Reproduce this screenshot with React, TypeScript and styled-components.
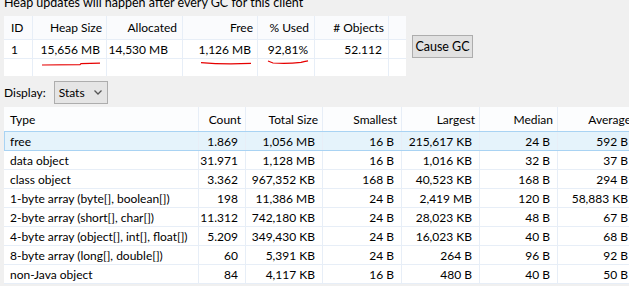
import React from 'react';
import styled, { createGlobalStyle } from 'styled-components';

const GlobalStyle = createGlobalStyle`
  html, body {
    margin: 0;
    padding: 0;
    background: #f0f0f0;
    overflow: hidden;
  }
  body {
    font-family: Lato, "Noto Sans", sans-serif;
    font-size: 12px;
    color: #000;
  }
`;

const Page = styled.div`
  width: 629px;
  height: 286px;
  overflow: hidden;
  display: flex;
  flex-direction: column;
  padding-left: 4px;
  box-sizing: border-box;
`;

const Notice = styled.div`
  height: 16px;
  line-height: 16px;
  margin-top: -5px;
  font-size: 12.5px;
  white-space: nowrap;
`;

const TopArea = styled.div`
  display: flex;
  align-items: center;
  gap: 6px;
  margin-top: 5px;
`;

const GridLine = '#e7eef7';

const StatGrid = styled.div`
  display: grid;
  grid-template-columns: 28px 73px 75px 74px 56px 73px 17px;
  grid-template-rows: 23px 18px 17px;
  gap: 1px;
  background: ${GridLine};
`;

const StatCell = styled.div<{ $head?: boolean; $align?: 'left' | 'right'; $pr?: number }>`
  background: ${({ $head }) => ($head ? '#fafbfd' : '#ffffff')};
  display: flex;
  align-items: center;
  justify-content: ${({ $align }) => ($align === 'left' ? 'flex-start' : 'flex-end')};
  padding: 0 ${({ $pr }) => $pr ?? 6}px 0 7px;
  white-space: nowrap;
  overflow: hidden;
`;

const MarkCell = styled.div`
  background: #ffffff;
  overflow: hidden;
  svg {
    display: block;
  }
`;

const Button = styled.button`
  width: 61px;
  height: 23px;
  padding: 0;
  background: #e1e1e1;
  border: 1px solid #adadad;
  font: inherit;
  font-size: 12.5px;
  color: #000;
`;

const DisplayRow = styled.div`
  display: flex;
  align-items: center;
  gap: 8px;
  margin-top: 5px;
`;

const Select = styled.div`
  width: 54px;
  height: 23px;
  box-sizing: border-box;
  background: #e5e5e5;
  border: 1px solid #adadad;
  display: flex;
  align-items: center;
  justify-content: space-between;
  padding: 0 5px 0 4px;
`;

const Table = styled.div`
  margin-top: 3px;
  width: 640px;
  background: #ffffff;
`;

const Row = styled.div<{ $head?: boolean; $selected?: boolean }>`
  display: flex;
  height: ${({ $head }) => ($head ? 24 : 18)}px;
  border-bottom: 1px solid ${({ $selected }) => ($selected ? '#a9d3f3' : GridLine)};
  background: ${({ $head, $selected }) => ($selected ? '#e5f3fb' : $head ? '#fcfdfe' : '#ffffff')};
  box-shadow: ${({ $selected }) => ($selected ? 'inset 1px 0 0 #a9d3f3, 0 -1px 0 #a9d3f3' : 'none')};
`;

const Cell = styled.div<{ $w: number; $align: 'left' | 'right'; $head?: boolean }>`
  width: ${({ $w }) => $w}px;
  flex: none;
  box-sizing: border-box;
  border-right: 1px solid ${GridLine};
  display: flex;
  align-items: center;
  justify-content: ${({ $align }) => ($align === 'left' ? 'flex-start' : 'flex-end')};
  padding: ${({ $align, $head }) => ($align === 'left' ? '0 0 0 6px' : $head ? '0 4px 0 0' : '0 7px 0 0')};
  white-space: nowrap;
  overflow: hidden;
`;

const columns: { title: string; w: number; align: 'left' | 'right' }[] = [
  { title: 'Type', w: 195, align: 'left' },
  { title: 'Count', w: 47, align: 'right' },
  { title: 'Total Size', w: 77, align: 'right' },
  { title: 'Smallest', w: 79, align: 'right' },
  { title: 'Largest', w: 78, align: 'right' },
  { title: 'Median', w: 78, align: 'right' },
  { title: 'Average', w: 78, align: 'right' },
];

const rows = [
  ['free', '1.869', '1,056 MB', '16 B', '215,617 KB', '24 B', '592 B'],
  ['data object', '31.971', '1,128 MB', '16 B', '1,016 KB', '32 B', '37 B'],
  ['class object', '3.362', '967,352 KB', '168 B', '40,523 KB', '168 B', '294 B'],
  ['1-byte array (byte[], boolean[])', '198', '11,386 MB', '24 B', '2,419 MB', '120 B', '58,883 KB'],
  ['2-byte array (short[], char[])', '11.312', '742,180 KB', '24 B', '28,023 KB', '48 B', '67 B'],
  ['4-byte array (object[], int[], float[])', '5.209', '349,430 KB', '24 B', '16,023 KB', '40 B', '68 B'],
  ['8-byte array (long[], double[])', '60', '5,391 KB', '24 B', '264 B', '96 B', '92 B'],
  ['non-Java object', '84', '4,117 KB', '16 B', '480 B', '40 B', '50 B'],
];

// hand-drawn red marks under the interesting numbers
const Mark = ({ w, d }: { w: number; d: string }) => (
  <svg width={w} height={17} viewBox={`0 0 ${w} 17`}>
    <path d={d} fill="none" stroke="#e60000" strokeWidth={1.2} />
  </svg>
);

const App: React.FC = () => (
  <>
    <GlobalStyle />
    <Page>
      <Notice>Heap updates will happen after every GC for this client</Notice>
      <TopArea>
        <StatGrid>
          <StatCell $head $align="left">ID</StatCell>
          <StatCell $head $pr={4}>Heap Size</StatCell>
          <StatCell $head $pr={5}>Allocated</StatCell>
          <StatCell $head $pr={4}>Free</StatCell>
          <StatCell $head $pr={5}>% Used</StatCell>
          <StatCell $head $pr={4}># Objects</StatCell>
          <StatCell $head />

          <StatCell $align="left">1</StatCell>
          <StatCell>15,656 MB</StatCell>
          <StatCell $pr={14}>14,530 MB</StatCell>
          <StatCell>1,126 MB</StatCell>
          <StatCell>92,81%</StatCell>
          <StatCell>52.112</StatCell>
          <StatCell />

          <MarkCell />
          <MarkCell>
            <Mark w={73} d="M9 6 L47 5.6 L48 4.6 L67 4.2" />
          </MarkCell>
          <MarkCell />
          <MarkCell>
            <Mark w={74} d="M18 3.6 Q40 5.6 68 4.4" />
          </MarkCell>
          <MarkCell>
            <Mark w={56} d="M10 2 L15 4 Q30 4.8 43 3.4 L46 2.6 L50 1.8" />
          </MarkCell>
          <MarkCell />
          <MarkCell />
        </StatGrid>
        <Button>Cause GC</Button>
      </TopArea>

      <DisplayRow>
        <span>Display:</span>
        <Select>
          <span>Stats</span>
          <svg width="8" height="5" viewBox="0 0 8 5">
            <path d="M0.5 0.5 L4 4 L7.5 0.5" fill="none" stroke="#555" strokeWidth="1.3" />
          </svg>
        </Select>
      </DisplayRow>

      <Table>
        <Row $head>
          {columns.map(c => (
            <Cell key={c.title} $w={c.w} $align={c.align} $head>
              {c.title}
            </Cell>
          ))}
        </Row>
        {rows.map((r, i) => (
          <Row key={r[0]} $selected={i === 0}>
            {r.map((v, j) => (
              <Cell key={j} $w={columns[j].w} $align={columns[j].align}>
                {v}
              </Cell>
            ))}
          </Row>
        ))}
      </Table>
    </Page>
  </>
);

export default App;
